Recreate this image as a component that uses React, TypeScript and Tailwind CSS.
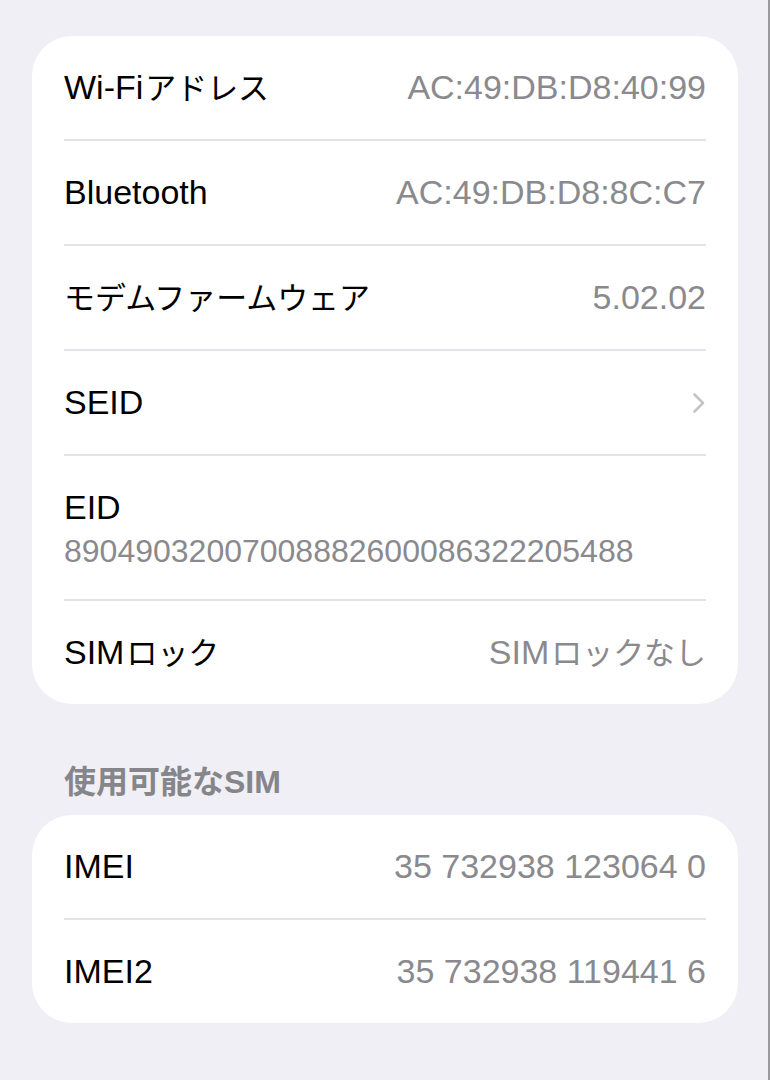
const FONT = "font-['Liberation_Sans','Noto_Sans_CJK_JP',sans-serif]"

type Row = { label: string; value?: string; chevron?: boolean; stacked?: boolean }

const deviceRows: Row[] = [
  { label: 'Wi-Fiアドレス', value: 'AC:49:DB:D8:40:99' },
  { label: 'Bluetooth', value: 'AC:49:DB:D8:8C:C7' },
  { label: 'モデムファームウェア', value: '5.02.02' },
  { label: 'SEID', chevron: true },
  { label: 'EID', value: '89049032007008882600086322205488', stacked: true },
  { label: 'SIMロック', value: 'SIMロックなし' },
]

const simRows: Row[] = [
  { label: 'IMEI', value: '35 732938 123064 0' },
  { label: 'IMEI2', value: '35 732938 119441 6' },
]

const CJK = /[\u3040-\u30ff\u4e00-\u9fff]/

// kana/kanji run a bit smaller than latin, like the system font does
function Mixed({ text }: { text: string }) {
  const parts = text.split(/([\u3040-\u30ff\u4e00-\u9fff]+)/).filter(Boolean)
  return (
    <>
      {parts.map((p, i) =>
        CJK.test(p) ? (
          <span key={i} className={i > 0 ? 'text-[0.91em] ml-[2px]' : 'text-[0.91em]'}>
            {p}
          </span>
        ) : (
          <span key={i}>{p}</span>
        ),
      )}
    </>
  )
}

function Chevron() {
  return (
    <svg width="14" height="22" viewBox="0 0 14 22" fill="none">
      <path d="M2.5 2.5 L11 11 L2.5 19.5" stroke="#c4c4c8" strokeWidth="2.6" strokeLinecap="round" strokeLinejoin="round" />
    </svg>
  )
}

function Cell({ row, last }: { row: Row; last: boolean }) {
  return (
    <div className="pl-8">
      {row.stacked ? (
        <div className="flex flex-col pt-[32px] pb-[29px] pr-8">
          <span className="text-[34px] leading-[38px] text-black">{row.label}</span>
          <span className="text-[32px] leading-[38px] mt-[6px] text-[#8a8a8e]">{row.value}</span>
        </div>
      ) : (
        <div className="flex h-[103px] items-center justify-between pr-8">
          <span className="text-[34px] text-black">
            <Mixed text={row.label} />
          </span>
          {row.chevron ? (
            <Chevron />
          ) : (
            <span className="text-[34px] text-[#8a8a8e]">
              <Mixed text={row.value ?? ''} />
            </span>
          )}
        </div>
      )}
      {!last && <div className="h-[2px] bg-[#e3e3e7] mr-8" />}
    </div>
  )
}

function Group({ rows }: { rows: Row[] }) {
  return (
    <div className="rounded-[40px] bg-white">
      {rows.map((r, i) => (
        <Cell key={r.label} row={r} last={i === rows.length - 1} />
      ))}
    </div>
  )
}

export default function App() {
  return (
    <div className={`${FONT} min-h-[1080px] w-[770px] bg-[#f0eff5] border-r-2 border-[#9a9a9e] pl-8 pr-[30px] pt-9`}>
      <Group rows={deviceRows} />
      <div className="pl-8 pt-[59px] pb-[14px] text-[32px] font-bold text-[#85858a] leading-[38px]">使用可能なSIM</div>
      <Group rows={simRows} />
    </div>
  )
}
